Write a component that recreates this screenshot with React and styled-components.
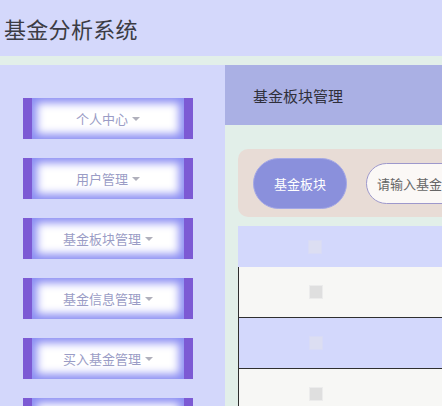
import styled, { createGlobalStyle } from "styled-components";

const GlobalStyle = createGlobalStyle`
  body {
    margin: 0;
    font-family: "Noto Sans CJK SC", "Liberation Sans", sans-serif;
    background: #e2efe9;
    overflow: hidden;
  }
`;

const Page = styled.div`
  width: 442px;
  height: 406px;
  overflow: hidden;
  background: #e2efe9;
`;

const TopBar = styled.header`
  height: 56px;
  background: #d4d8fb;
  padding-left: 4px;
  display: flex;
  align-items: center;
  & h1 {
    margin: 0;
    font-size: 22px;
    font-weight: 400;
    color: #3c3c44;
    letter-spacing: 0.3px;
  }
`;

const Body = styled.div`
  display: flex;
  margin-top: 9px;
  height: 341px;
`;

const Sidebar = styled.nav`
  width: 225px;
  flex-shrink: 0;
  background: #d3d7fb;
  padding: 33px 0 0 23px;
  box-sizing: border-box;
  display: flex;
  flex-direction: column;
  gap: 19px;
`;

const MenuItem = styled.div`
  width: 170px;
  height: 41px;
  flex-shrink: 0;
  box-sizing: border-box;
  border-left: 9px solid #7c5ad4;
  border-right: 9px solid #7c5ad4;
  background: #ffffff;
  box-shadow: inset 0 0 9px 5px #8c8ef3;
  display: flex;
  align-items: center;
  justify-content: center;
  gap: 4px;
  font-size: 13px;
  color: #9a9cc6;
`;

const Caret = styled.span`
  width: 0;
  height: 0;
  border-left: 4px solid transparent;
  border-right: 4px solid transparent;
  border-top: 4px solid #b0b0bc;
  margin-top: 1px;
`;

const Main = styled.main`
  flex: 1;
  min-width: 0;
  overflow: hidden;
`;

const PanelHead = styled.div`
  height: 60px;
  background: #aab0e4;
  padding-left: 28px;
  display: flex;
  align-items: center;
  font-size: 15px;
  color: #2f2f3a;
`;

const Content = styled.div`
  padding: 24px 0 0 13px;
`;

const SearchCard = styled.div`
  width: 600px;
  height: 68px;
  box-sizing: border-box;
  background: #e8dcd6;
  border-radius: 10px;
  padding: 0 15px;
  display: flex;
  align-items: center;
  gap: 19px;
`;

const PillButton = styled.button`
  width: 94px;
  height: 51px;
  border-radius: 26px;
  border: 1px solid #a4a8e6;
  background: #8a90dc;
  color: #ffffff;
  font-family: inherit;
  font-size: 13px;
`;

const SearchInput = styled.input`
  width: 220px;
  height: 41px;
  box-sizing: border-box;
  border-radius: 21px;
  border: 1px solid #9d98cc;
  background: #fbf8f6;
  padding: 0 10px;
  font-family: inherit;
  font-size: 13px;
  &::placeholder {
    color: #666;
  }
`;

const Table = styled.div`
  width: 600px;
  margin-top: 9px;
`;

const Row = styled.div`
  display: flex;
  height: ${(p) => p.$h}px;
  background: ${(p) => p.$bg};
  box-sizing: border-box;
  border-left: ${(p) => (p.$lined ? "1px solid #2f2f2f" : "none")};
  border-bottom: ${(p) => (p.$lined ? "1px solid #2f2f2f" : "none")};
`;

const CheckCell = styled.div`
  width: 154px;
  display: flex;
  align-items: center;
  justify-content: center;
`;

const Check = styled.span`
  width: 14px;
  height: 14px;
  box-sizing: border-box;
  background: ${(p) => (p.$faint ? "#dcdef2" : "#dfdfdf")};
  border: 1px solid ${(p) => (p.$faint ? "#d8dbf6" : "#ececec")};
`;

const menus = ["个人中心", "用户管理", "基金板块管理", "基金信息管理", "买入基金管理", "卖出基金管理"];

const rows = [
  { bg: "#f7f7f5", faint: false },
  { bg: "#d3d8fc", faint: true },
  { bg: "#f7f7f5", faint: false },
];

export default function App() {
  return (
    <Page>
      <GlobalStyle />
      <TopBar>
        <h1>基金分析系统</h1>
      </TopBar>
      <Body>
        <Sidebar>
          {menus.map((m) => (
            <MenuItem key={m}>
              {m}
              <Caret />
            </MenuItem>
          ))}
        </Sidebar>
        <Main>
          <PanelHead>基金板块管理</PanelHead>
          <Content>
            <SearchCard>
              <PillButton>基金板块</PillButton>
              <SearchInput placeholder="请输入基金板块" />
            </SearchCard>
            <Table>
              <Row $h={41} $bg="#d3d8fc">
                <CheckCell>
                  <Check $faint />
                </CheckCell>
              </Row>
              {rows.map((r, i) => (
                <Row key={i} $h={51} $bg={r.bg} $lined>
                  <CheckCell>
                    <Check $faint={r.faint} />
                  </CheckCell>
                </Row>
              ))}
            </Table>
          </Content>
        </Main>
      </Body>
    </Page>
  );
}
